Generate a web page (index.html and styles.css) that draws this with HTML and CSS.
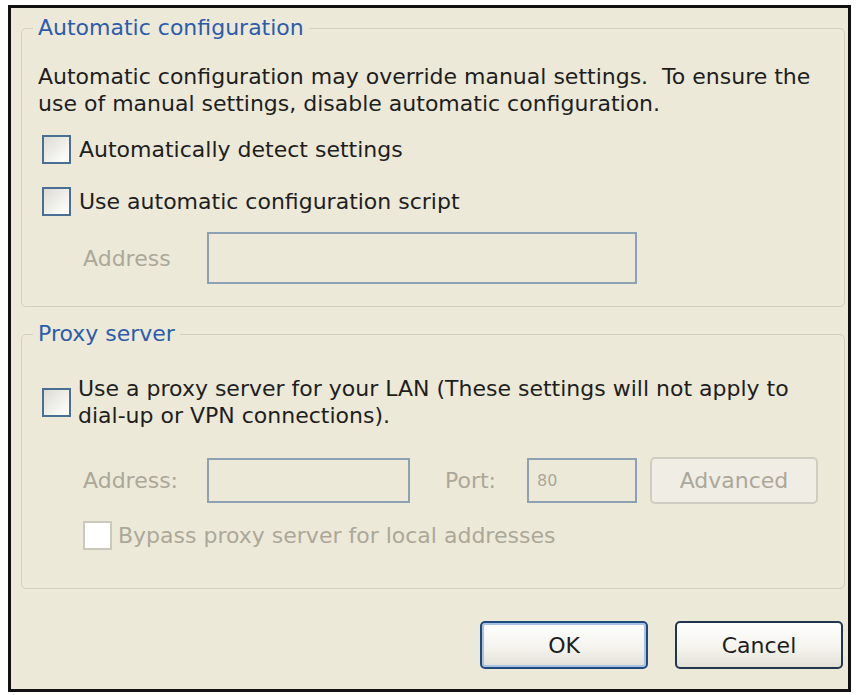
FILE: index.html
```html
<!DOCTYPE html>
<html lang="en">
<head>
    <meta charset="UTF-8">
    <meta name="viewport" content="width=device-width, initial-scale=1.0">
    <title>Local Area Network (LAN) Settings</title>
    <link rel="stylesheet" href="styles.css">
</head>
<body>
    <div class="dialog">
        <!-- Automatic configuration -->
        <fieldset class="group group-auto">
            <legend>Automatic configuration</legend>
            <p class="note">Automatic configuration may override manual settings.&nbsp; To ensure the<br>use of manual settings, disable automatic configuration.</p>

            <label class="check check-detect"><span class="box"></span>Automatically detect settings</label>
            <label class="check check-script"><span class="box"></span>Use automatic configuration script</label>

            <div class="field-row row-script">
                <span class="field-label">Address</span>
                <input type="text" class="textbox textbox-script" disabled>
            </div>
        </fieldset>

        <!-- Proxy server -->
        <fieldset class="group group-proxy">
            <legend>Proxy server</legend>
            <label class="check check-proxy"><span class="box"></span><span class="check-text">Use a proxy server for your LAN (These settings will not apply to<br>dial-up or VPN connections).</span></label>

            <div class="field-row row-proxy">
                <span class="field-label">Address:</span>
                <input type="text" class="textbox textbox-address" disabled>
                <span class="field-label port-label">Port:</span>
                <input type="text" class="textbox textbox-port" value="80" disabled>
                <button type="button" class="btn btn-advanced" disabled>Advanced</button>
            </div>

            <label class="check check-bypass disabled"><span class="box"></span>Bypass proxy server for local addresses</label>
        </fieldset>

        <div class="actions">
            <button type="button" class="btn btn-default">OK</button>
            <button type="button" class="btn">Cancel</button>
        </div>
    </div>
</body>
</html>
```

FILE: styles.css
```css
body {
    margin: 0;
    background: #fff;
    font-family: "DejaVu Sans", Verdana, sans-serif;
    font-size: 22px;
    color: #1e1e1e;
}

/* dialog frame */
.dialog {
    box-sizing: border-box;
    width: 843px;
    height: 687px;
    margin: 5px 0 0 8px;
    padding: 7px 3px 0 10px;
    border: 3px solid #111;
    background: #ece9d8;
}

/* group boxes */
.group {
    margin: 0;
    padding: 0 16px 22px 16px;
    border: 1px solid #d3d0c0;
    border-radius: 5px;
}

.group legend {
    margin-left: -5px;
    padding: 0 5px;
    line-height: 26px;
    color: #2d5cab;
}

.group-proxy {
    margin-top: 14px;
    padding-bottom: 38px;
}

.note {
    margin: 22px 0 0 0;
    line-height: 27px;
}

/* checkboxes */
.check {
    display: flex;
    align-items: center;
    gap: 8px;
    margin-left: 4px;
    line-height: 26px;
}

.check .box {
    flex: none;
    box-sizing: border-box;
    width: 29px;
    height: 29px;
    border: 2px solid #4b6e93;
    background: linear-gradient(135deg, #dcdbd2, #f6f6f2 70%, #fff);
}

.check-detect {
    margin-top: 18px;
}

.check-script {
    margin-top: 23px;
}

.check-proxy {
    margin-top: 28px;
    gap: 7px;
}

.check-text {
    line-height: 27px;
}

.check.disabled {
    margin: 17px 0 0 45px;
    gap: 6px;
    color: #aca899;
}

.check.disabled .box {
    border-color: #cbc9bc;
    background: #fff;
}

/* address / port rows */
.field-row {
    display: flex;
    align-items: center;
    margin-left: 45px;
}

.row-script {
    margin-top: 16px;
}

.row-proxy {
    margin-top: 28px;
}

.field-label {
    width: 124px;
    color: #aca899;
}

.port-label {
    width: 82px;
    margin-left: 35px;
}

.textbox {
    box-sizing: border-box;
    margin: 0;
    padding: 0 8px;
    border: 2px solid #8ea1b3;
    background: #ece9d8;
    font: inherit;
    font-size: 16px;
    color: #aca899;
}

.textbox-script {
    width: 430px;
    height: 52px;
}

.textbox-address {
    width: 203px;
    height: 45px;
}

.textbox-port {
    width: 110px;
    height: 45px;
}

/* buttons */
.btn {
    box-sizing: border-box;
    width: 168px;
    height: 48px;
    margin: 0;
    border: 2px solid #22374e;
    border-radius: 5px;
    background: linear-gradient(#fff, #f3f2ec 60%, #e3e1d6);
    font: inherit;
    color: #1e1e1e;
}

.btn-default {
    border-color: #1f4a7e;
    box-shadow: inset 0 0 0 2px #a9c2e6;
}

.btn-advanced {
    height: 47px;
    margin-left: 13px;
    border-color: #cfcdc1;
    background: #efede4;
    color: #aca899;
}

.actions {
    display: flex;
    justify-content: flex-end;
    gap: 27px;
    margin: 32px 2px 0 0;
}
```
